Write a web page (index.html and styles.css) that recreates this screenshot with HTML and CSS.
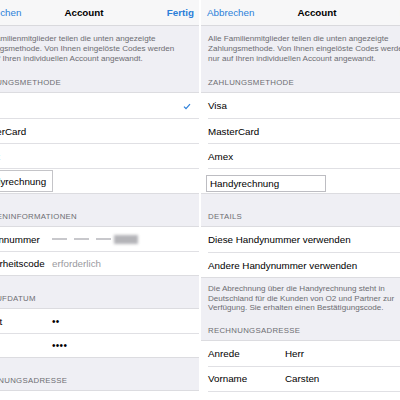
FILE: index.html
```html
<!DOCTYPE html>
<html lang="de">
<head>
    <meta charset="UTF-8">
    <meta name="viewport" content="width=device-width, initial-scale=1.0">
    <title>Account</title>
    <link rel="stylesheet" href="styles.css">
</head>
<body>

    <div class="pair">

        <!-- Kreditkarte -->
        <div class="panel panel-left">
            <div class="screen">
                <div class="nav">
                    <span class="nav-btn">Abbrechen</span>
                    <span class="nav-title">Account</span>
                    <span class="nav-btn nav-done">Fertig</span>
                </div>

                <div class="note">
                    Alle Familienmitglieder teilen die unten angezeigte<br>
                    Zahlungsmethode. Von Ihnen eingelöste Codes werden<br>
                    nur auf Ihren individuellen Account angewandt.
                </div>

                <div class="group-title first">Zahlungsmethode</div>
                <div class="group">
                    <div class="row">Visa
                        <svg class="check" width="8" height="7" viewBox="0 0 8 7">
                            <path d="M1 3.6 L3 5.6 L7 1.2" fill="none" stroke="#2b7fd9" stroke-width="1.2"/>
                        </svg>
                    </div>
                    <div class="row">MasterCard</div>
                    <div class="row">Amex</div>
                    <div class="row"><span class="input input-tall">Handyrechnung</span></div>
                </div>

                <div class="group-title">Karteninformationen</div>
                <div class="group compact">
                    <div class="row">
                        <span class="label">Kartennummer</span>
                        <span class="masked">
                            <span class="dash"></span>
                            <span class="dash"></span>
                            <span class="dash"></span>
                            <span class="blob"></span>
                        </span>
                    </div>
                    <div class="row">
                        <span class="label">Sicherheitscode</span>
                        <span class="placeholder">erforderlich</span>
                    </div>
                </div>

                <div class="group-title">Ablaufdatum</div>
                <div class="group compact">
                    <div class="row">
                        <span class="label">Monat</span>
                        <span class="dots">••</span>
                    </div>
                    <div class="row">
                        <span class="label">Jahr</span>
                        <span class="dots">••••</span>
                    </div>
                </div>

                <div class="group-title">Rechnungsadresse</div>
                <div class="group">
                    <div class="row">
                        <span class="label">Anrede</span>
                        <span>Herr</span>
                    </div>
                </div>
            </div>
        </div>

        <!-- Handyrechnung -->
        <div class="panel panel-right">
            <div class="screen">
                <div class="nav">
                    <span class="nav-btn">Abbrechen</span>
                    <span class="nav-title">Account</span>
                    <span class="nav-btn nav-done">Fertig</span>
                </div>

                <div class="note">
                    Alle Familienmitglieder teilen die unten angezeigte<br>
                    Zahlungsmethode. Von Ihnen eingelöste Codes werden<br>
                    nur auf Ihren individuellen Account angewandt.
                </div>

                <div class="group-title first">Zahlungsmethode</div>
                <div class="group">
                    <div class="row">Visa</div>
                    <div class="row">MasterCard</div>
                    <div class="row">Amex</div>
                    <div class="row"><span class="input">Handyrechnung</span></div>
                </div>

                <div class="group-title">Details</div>
                <div class="group">
                    <div class="row">Diese Handynummer verwenden</div>
                    <div class="row">Andere Handynummer verwenden</div>
                </div>

                <div class="footer-note">
                    Die Abrechnung über die Handyrechnung steht in<br>
                    Deutschland für die Kunden von O2 und Partner zur<br>
                    Verfügung. Sie erhalten einen Bestätigungscode.
                </div>

                <div class="group-title after-note">Rechnungsadresse</div>
                <div class="group">
                    <div class="row">
                        <span class="label">Anrede</span>
                        <span>Herr</span>
                    </div>
                    <div class="row">
                        <span class="label">Vorname</span>
                        <span>Carsten</span>
                    </div>
                    <div class="row">
                        <span class="label">Nachname</span>
                        <span>Kochlev</span>
                    </div>
                </div>
            </div>
        </div>

    </div>

</body>
</html>
```

FILE: styles.css
```css
/* Global styling */
* {
    box-sizing: border-box;
}

body {
    margin: 0;
    padding: 0;
    background: #ffffff;
    color: #000000;
    font-family: "Liberation Sans", Arial, sans-serif;
}

/* Two phone screens side by side */
.pair {
    display: flex;
    gap: 2px;
    height: 400px;
    overflow: hidden;
}

.panel {
    width: 199px;
    height: 400px;
    overflow: hidden;
    background: #efeff4;
}

.screen {
    width: 232px;
}

/* left screen only shows its right part */
.panel-left .screen {
    margin-left: -32px;
}

/* Navigation bar */
.nav {
    display: grid;
    grid-template-columns: 1fr auto 1fr;
    align-items: center;
    height: 26px;
    padding: 0 6px 1px;
    background: #f7f7f8;
    border-bottom: 1px solid #d9d9dd;
    font-size: 9.8px;
    white-space: nowrap;
}

.nav-btn {
    color: #2b7fd9;
}

.nav-title {
    font-weight: bold;
}

.nav-done {
    font-weight: bold;
    text-align: right;
}

/* Grey explanation texts */
.note,
.footer-note {
    padding: 8px 7px 0;
    font-size: 8.1px;
    line-height: 10px;
    color: #6d6d72;
    white-space: nowrap;
}

.footer-note {
    padding-top: 6px;
    line-height: 9.5px;
}

/* Section headers */
.group-title {
    padding: 18px 7px 4px;
    font-size: 7.8px;
    line-height: 10px;
    letter-spacing: 0.3px;
    text-transform: uppercase;
    color: #6d6d72;
    white-space: nowrap;
}

.group-title.first {
    padding-top: 14px;
}

.group-title.after-note {
    padding-top: 13px;
}

/* White table groups */
.group {
    background: #ffffff;
    border-top: 1px solid #dcdce0;
    border-bottom: 1px solid #dcdce0;
}

.row {
    display: flex;
    align-items: center;
    height: 25px;
    margin-left: 7px;
    padding-right: 9px;
    font-size: 9.8px;
    white-space: nowrap;
}

.row + .row {
    border-top: 1px solid #e0e0e4;
}

.group.compact .row {
    height: 24px;
}

.label {
    width: 77px;
    flex: none;
}

.check {
    margin-left: auto;
    margin-top: 1px;
}

/* Text field look of the selected method */
.input {
    display: flex;
    align-items: center;
    width: 120px;
    height: 17px;
    margin-left: -2px;
    margin-top: 4px;
    padding-left: 3px;
    border: 1px solid #bdbdc2;
}

.input-tall {
    width: 80px;
    height: 22px;
    margin-top: 0;
    border-color: #c4c4c8;
}

.placeholder {
    color: #9a9aa0;
}

.dots {
    font-size: 10px;
    letter-spacing: 0.3px;
}

/* Hidden card number */
.masked {
    display: flex;
    align-items: center;
    gap: 7px;
}

.dash {
    width: 15px;
    height: 2.5px;
    background: #c8c8cc;
    filter: blur(0.5px);
}

.blob {
    width: 24px;
    height: 9px;
    margin-left: -4px;
    background: #b4b4b8;
    filter: blur(1.5px);
}
```
